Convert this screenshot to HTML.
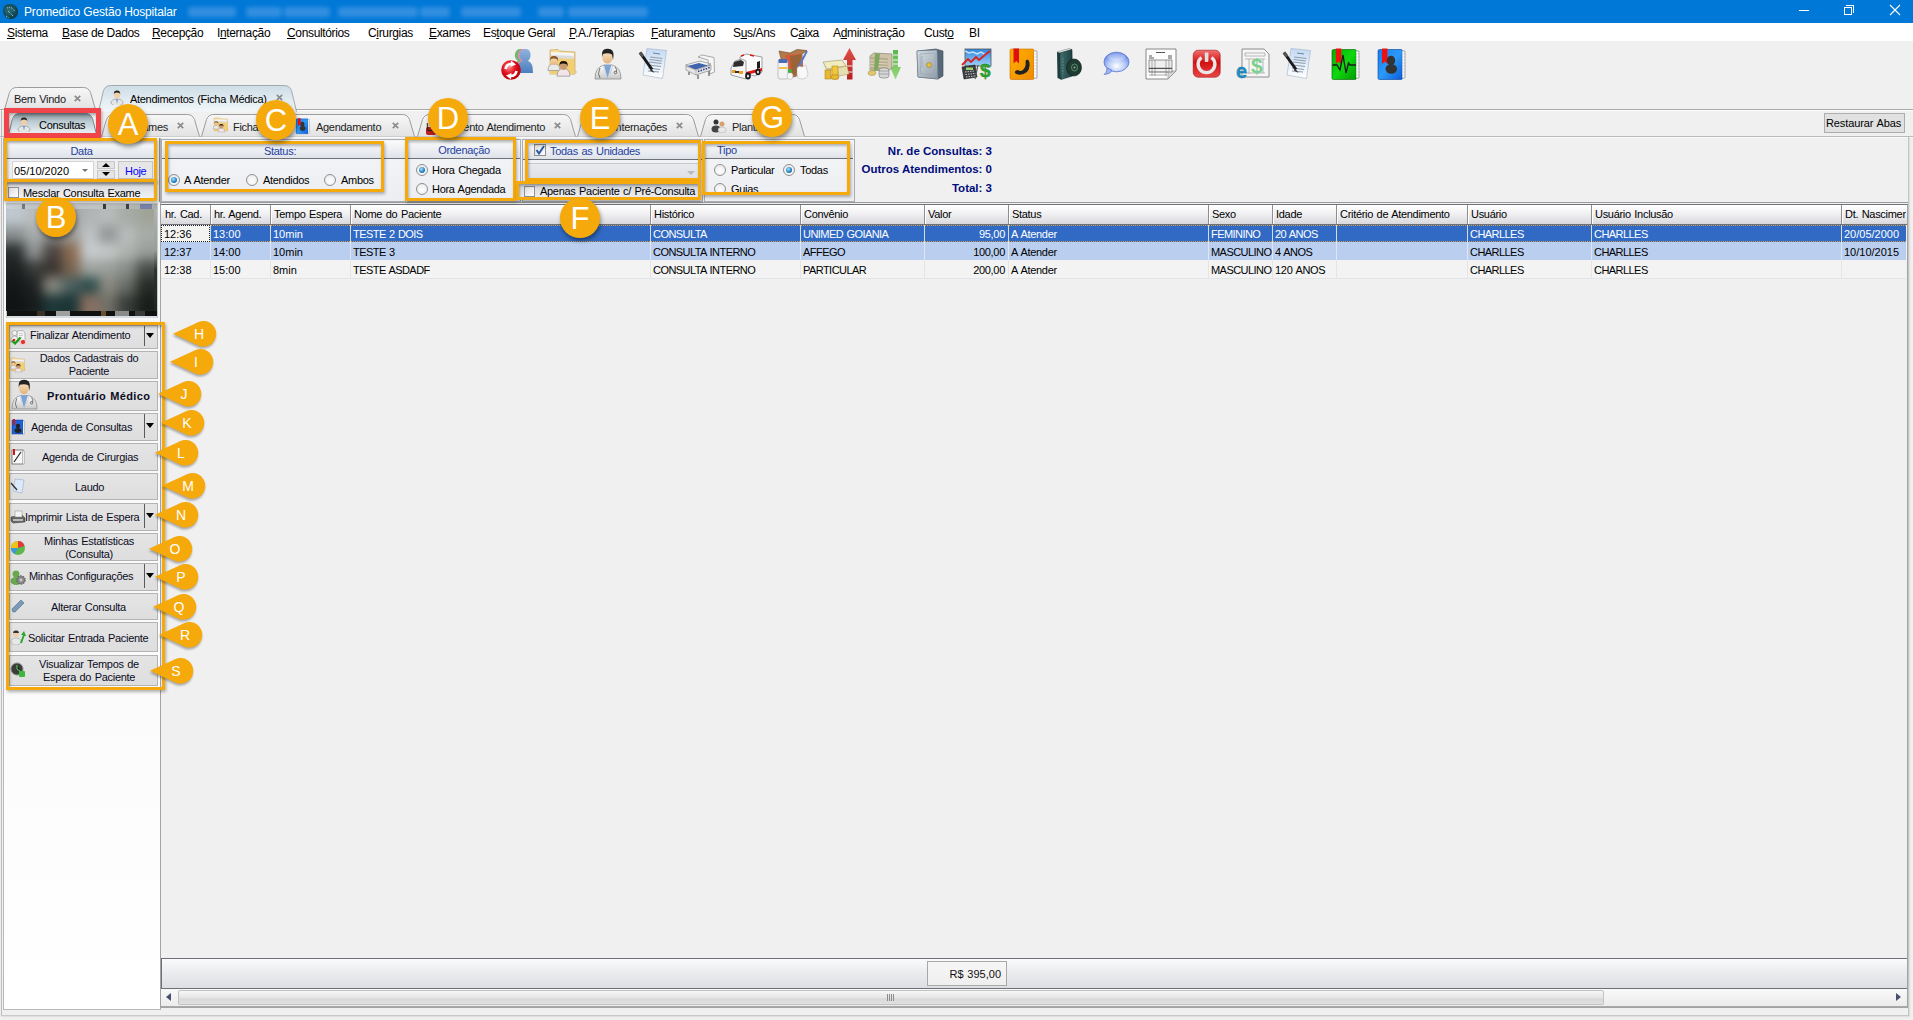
<!DOCTYPE html>
<html><head><meta charset="utf-8"><style>
*{margin:0;padding:0;box-sizing:border-box}
html,body{width:1913px;height:1020px;overflow:hidden;background:#f0f0f0;font-family:"Liberation Sans",sans-serif;font-size:11px;color:#000}
body{position:relative}
.a{position:absolute}
.t{position:absolute;white-space:nowrap;line-height:1;letter-spacing:-0.3px;word-spacing:0.8px}
.mi{position:absolute;top:27px;font-size:12px;white-space:nowrap;line-height:1;color:#000;letter-spacing:-0.35px}
.u{text-decoration:underline;text-underline-offset:1px}
.ob{position:absolute;border:3px solid #f5a90b;box-shadow:1px 2px 3px rgba(0,0,0,.35)}
.circ{position:absolute;width:40px;height:40px;border-radius:50%;background:#f5a90b;color:#fff;font-size:31px;line-height:40px;text-align:center;box-shadow:1px 3px 4px rgba(0,0,0,.4)}
.drop{position:absolute;width:30px;height:30px;background:#f5a90b;border-radius:50% 50% 50% 0;transform:rotate(45deg);box-shadow:1px 2px 3px rgba(0,0,0,.35)}
.dl{position:absolute;width:30px;height:30px;color:#fff;font-size:15px;line-height:30px;text-align:center}
.hdr{position:absolute;background:linear-gradient(#fafbfc,#dfe3e9);border-bottom:1px solid #6d7178}
.ht{position:absolute;color:#1f3f9f;white-space:nowrap;line-height:1;letter-spacing:-0.3px;word-spacing:0.8px}
.radio{position:absolute;width:12px;height:12px;border-radius:50%;border:1px solid #8e8f8f;background:radial-gradient(circle at 50% 60%,#fff,#e6e6e6)}
.radio.on::after{content:"";position:absolute;left:2px;top:2px;width:6px;height:6px;border-radius:50%;background:radial-gradient(circle at 40% 35%,#a8e0ff,#1a7fc0 60%,#0b4f80)}
.chk{position:absolute;width:11px;height:11px;border:1px solid #8e8f8f;background:linear-gradient(135deg,#dcdcdc,#fff)}
.btn{position:absolute;left:9px;width:149px;background:linear-gradient(#e4e4e4,#dedede);border:1px solid #b3b3b3}
.bt{position:absolute;white-space:nowrap;line-height:1.15;text-align:center;color:#000;width:100%}
</style></head><body>
<div class="a" style="left:0;top:0;width:1913px;height:23px;background:#0078d7"></div>
<div class="a" style="left:3px;top:4px;width:15px;height:15px;border-radius:40% 50% 45% 50%;background:radial-gradient(circle at 40% 40%,#2d6f7a,#104652 60%,#082a33)"></div>
<svg class="a" style="left:3px;top:4px" width="15" height="15"><path d="M4 4 Q9 2 12 8 M5 7 L10 12 M3 12 L6 14" stroke="#cde" stroke-width="0.9" fill="none" stroke-dasharray="1 1"/></svg>
<div class="t" style="left:24px;top:6px;font-size:12px;color:#fff;letter-spacing:-0.15px;word-spacing:0">Promedico Gestão Hospitalar</div>
<div class="a" style="left:188px;top:7px;width:48px;height:10px;border-radius:3px;background:rgba(110,170,235,.45);filter:blur(2px)"></div>
<div class="a" style="left:246px;top:7px;width:36px;height:10px;border-radius:3px;background:rgba(110,170,235,.45);filter:blur(2px)"></div>
<div class="a" style="left:284px;top:7px;width:46px;height:10px;border-radius:3px;background:rgba(110,170,235,.45);filter:blur(2px)"></div>
<div class="a" style="left:338px;top:7px;width:80px;height:10px;border-radius:3px;background:rgba(110,170,235,.45);filter:blur(2px)"></div>
<div class="a" style="left:420px;top:7px;width:30px;height:10px;border-radius:3px;background:rgba(110,170,235,.45);filter:blur(2px)"></div>
<div class="a" style="left:461px;top:7px;width:60px;height:10px;border-radius:3px;background:rgba(110,170,235,.45);filter:blur(2px)"></div>
<div class="a" style="left:538px;top:7px;width:26px;height:10px;border-radius:3px;background:rgba(110,170,235,.45);filter:blur(2px)"></div>
<div class="a" style="left:568px;top:7px;width:80px;height:10px;border-radius:3px;background:rgba(110,170,235,.45);filter:blur(2px)"></div>
<div class="a" style="left:1799px;top:10px;width:10px;height:1px;background:#fff"></div>
<div class="a" style="left:1844px;top:7px;width:8px;height:8px;border:1px solid #fff"></div>
<div class="a" style="left:1846px;top:5px;width:8px;height:8px;border-top:1px solid #fff;border-right:1px solid #fff"></div>
<svg class="a" style="left:1889px;top:4px" width="12" height="12"><path d="M1 1L11 11M11 1L1 11" stroke="#fff" stroke-width="1.1"/></svg>
<div class="a" style="left:0;top:23px;width:1913px;height:18px;background:#fff"></div>
<div class="mi" style="left:7px"><span class="u">S</span>istema</div>
<div class="mi" style="left:62px"><span class="u">B</span>ase de Dados</div>
<div class="mi" style="left:152px"><span class="u">R</span>ecepção</div>
<div class="mi" style="left:217px">I<span class="u">n</span>ternação</div>
<div class="mi" style="left:287px"><span class="u">C</span>onsultórios</div>
<div class="mi" style="left:368px">C<span class="u">i</span>rurgias</div>
<div class="mi" style="left:429px"><span class="u">E</span>xames</div>
<div class="mi" style="left:483px">Es<span class="u">t</span>oque Geral</div>
<div class="mi" style="left:569px"><span class="u">P</span>.A./Terapias</div>
<div class="mi" style="left:651px"><span class="u">F</span>aturamento</div>
<div class="mi" style="left:733px">S<span class="u">u</span>s/Ans</div>
<div class="mi" style="left:790px">C<span class="u">a</span>ixa</div>
<div class="mi" style="left:833px">A<span class="u">d</span>ministração</div>
<div class="mi" style="left:924px">Cust<span class="u">o</span></div>
<div class="mi" style="left:969px">BI</div>
<svg width="0" height="0" style="position:absolute"><defs><linearGradient id="gFace" x1="0" y1="0" x2="0" y2="1"><stop offset="0" stop-color="#fbe6c6"/><stop offset="1" stop-color="#e2b27a"/></linearGradient><linearGradient id="gCoat" x1="0" y1="0" x2="0" y2="1"><stop offset="0" stop-color="#ffffff"/><stop offset="1" stop-color="#c9c9c9"/></linearGradient><linearGradient id="gBlueP" x1="0" y1="0" x2="0" y2="1"><stop offset="0" stop-color="#8fb3dc"/><stop offset="1" stop-color="#4b7fbf"/></linearGradient><radialGradient id="gRed" cx="40%" cy="35%" r="70%"><stop offset="0" stop-color="#ff8a8a"/><stop offset="0.5" stop-color="#e0101e"/><stop offset="1" stop-color="#b0000a"/></radialGradient><linearGradient id="gFold" x1="0" y1="0" x2="0" y2="1"><stop offset="0" stop-color="#f7df9a"/><stop offset="1" stop-color="#e3b857"/></linearGradient><linearGradient id="gPaper" x1="0" y1="0" x2="0" y2="1"><stop offset="0" stop-color="#c3d9f4"/><stop offset="1" stop-color="#ffffff"/></linearGradient><linearGradient id="gRedBtn" x1="0" y1="0" x2="0" y2="1"><stop offset="0" stop-color="#f27070"/><stop offset="0.45" stop-color="#d21010"/><stop offset="1" stop-color="#e84848"/></linearGradient><linearGradient id="gOrange" x1="0" y1="0" x2="1" y2="1"><stop offset="0" stop-color="#ffb000"/><stop offset="1" stop-color="#f08a00"/></linearGradient><linearGradient id="gGreenB" x1="0" y1="0" x2="1" y2="1"><stop offset="0" stop-color="#00b000"/><stop offset="0.5" stop-color="#10d810"/><stop offset="1" stop-color="#009a00"/></linearGradient><linearGradient id="gBlueB" x1="0" y1="0" x2="1" y2="1"><stop offset="0" stop-color="#1a7cf0"/><stop offset="0.5" stop-color="#2c9af8"/><stop offset="1" stop-color="#0a5ad8"/></linearGradient><linearGradient id="gTeal" x1="0" y1="0" x2="1" y2="0"><stop offset="0" stop-color="#3f6e6e"/><stop offset="1" stop-color="#1d3f40"/></linearGradient><radialGradient id="gBub" cx="50%" cy="70%" r="75%"><stop offset="0" stop-color="#ffffff"/><stop offset="0.45" stop-color="#b8ccf8"/><stop offset="1" stop-color="#4a6ee0"/></radialGradient><linearGradient id="gSafe" x1="0" y1="0" x2="1" y2="1"><stop offset="0" stop-color="#d9e0e6"/><stop offset="1" stop-color="#8c9aa6"/></linearGradient><linearGradient id="gSky" x1="0" y1="0" x2="0" y2="1"><stop offset="0" stop-color="#2a88e0"/><stop offset="1" stop-color="#9fd0f8"/></linearGradient><linearGradient id="gArrR" x1="0" y1="0" x2="0" y2="1"><stop offset="0" stop-color="#e05048"/><stop offset="1" stop-color="#b82020"/></linearGradient><linearGradient id="gArrG" x1="0" y1="0" x2="0" y2="1"><stop offset="0" stop-color="#58b848"/><stop offset="1" stop-color="#9ad880"/></linearGradient></defs></svg>
<svg class="a" style="left:500px;top:48px;overflow:visible" width="32" height="32" viewBox="0 0 32 32"><path d="M12 24 Q12 14 18 13 Q14 10 15 6 Q16 1 20 1 Q24 1 25 6 Q26 10 22 13 Q28 14 28 24Z" fill="#74b86e"/><path d="M15 24 Q15 14 21 13 Q17 10 18 6 Q19 1 23 1 Q27 1 28 6 Q29 10 25 13 Q31 14 31 24Z" fill="#d68cb4"/><path d="M17 25 Q17 14 23 13 Q19 10 20 6 Q21 1 25.5 1 Q30 1 30.5 6 Q31 10 28 13 Q33 14 33 25Z" fill="url(#gBlueP)"/><circle cx="11" cy="22" r="9.8" fill="url(#gRed)"/><path d="M5.5 21 Q6.5 15.5 12.5 16" stroke="#fff" stroke-width="2.6" fill="none"/><path d="M11 12.5 L16 16.5 L10.5 19Z" fill="#fff"/><path d="M16.5 23 Q15.5 28.5 9.5 28" stroke="#fff" stroke-width="2.6" fill="none"/><path d="M11 31.5 L6 27.5 L11.5 25Z" fill="#fff"/></svg>
<svg class="a" style="left:546px;top:48px;overflow:visible" width="32" height="32" viewBox="0 0 32 32"><path d="M26 20 L31 24 L27 27Z" fill="#e8e8e8" stroke="#bbb" stroke-width="0.5"/><path d="M4 2 L12 1.5 L13.5 3 L29 4 L29 26 L4 26Z" fill="url(#gFold)" stroke="#c09a4a" stroke-width="0.6"/><path d="M5 4 L28 5 L28 9 L5 8Z" fill="#f4f4f4"/><path d="M5 7 L27 8 L28 11 L6 10Z" fill="#dcdcdc"/><path d="M4 11 L28 12 L29 26 L4 26Z" fill="#f2cf72"/><path d="M2.0 22.58 Q2.0 15.979999999999999 8 15.379999999999999 Q14.0 15.979999999999999 14.0 22.58Z" fill="#e9e9e9" stroke="#8d8d8d" stroke-width="0.7"/><ellipse cx="8" cy="12.559999999999999" rx="3.8" ry="4.56" fill="url(#gFace)"/><path d="M4.01 13.015999999999998 Q3.4400000000000004 7.772 8 8 Q12.94 8 11.99 13.471999999999998 L11.04 11.191999999999998 Q8 10.052 4.96 10.963999999999999Z" fill="#8a5a32"/><path d="M11.0 28.129999999999995 Q11.0 20.979999999999997 17.5 20.33 Q24.0 20.979999999999997 24.0 28.129999999999995Z" fill="#f3e4e8" stroke="#8d8d8d" stroke-width="0.7"/><ellipse cx="17.5" cy="17.56" rx="3.8" ry="4.56" fill="#c99a72"/><path d="M13.51 18.016 Q12.940000000000001 12.772 17.5 13 Q22.439999999999998 13 21.49 18.471999999999998 L20.54 16.192 Q17.5 15.052 14.46 15.963999999999999Z" fill="#1e1410"/></svg>
<svg class="a" style="left:592px;top:48px;overflow:visible" width="32" height="32" viewBox="0 0 32 32"><path d="M3 31 Q3 19 12 17 L20 17 Q29 19 29 31Z" fill="url(#gCoat)" stroke="#8d8d8d" stroke-width="0.8"/><path d="M12 17 L15.5 30 L19.5 17Z" fill="#7aa4d8"/><path d="M11 17 L14 26 M21 17 L18 26" stroke="#c8c8c8" stroke-width="0.8"/><path d="M8 20 Q5 26 8 30 M23 19 Q26 22 24 24" stroke="#666" stroke-width="0.9" fill="none"/><circle cx="23.5" cy="24.5" r="1.3" fill="none" stroke="#555" stroke-width="0.8"/><ellipse cx="15.5" cy="9" rx="5.2" ry="6.6" fill="url(#gFace)"/><path d="M10 9 Q9 0.5 15.5 0.8 Q22 0.5 21.5 8 L21 12 L20 6.5 Q16 4.5 11 6Z" fill="#232323"/></svg>
<svg class="a" style="left:638px;top:48px;overflow:visible" width="32" height="32" viewBox="0 0 32 32"><path d="M9 0.5 L28.5 2.5 L24.5 30.5 L5 27Z" fill="url(#gPaper)" stroke="#9fb2c8" stroke-width="0.6"/><path d="M15 5 L22 6" stroke="#6f8296" stroke-width="1"/><path d="M12 9 L24.5 10.5 M11.5 11.5 L24 13 M11 14 L23.5 15.5 M10.5 17 L23 18.5 M10 20 L22 21.5 M10 23 L21 24" stroke="#8f9caa" stroke-width="1.1"/><path d="M2 4.5 L14 21.5" stroke="#1a1a1a" stroke-width="3"/><path d="M2 4.5 L5 8.5" stroke="#555" stroke-width="3.2"/><path d="M13 20 L16.5 25 L12 22.5Z" fill="#333"/></svg>
<svg class="a" style="left:684px;top:48px;overflow:visible" width="32" height="32" viewBox="0 0 32 32"><path d="M14 9 L18 7 L30 9.5 L30.5 24 L26 26 L24 12Z" fill="#f6f6f6" stroke="#8a8a8a" stroke-width="0.7"/><path d="M1.5 17 L16 13 L27 16 L12 21Z" fill="#f4f4f4" stroke="#8a8a8a" stroke-width="0.7"/><path d="M3.5 18 L15 15 L24 17.5 L11 21.5Z" fill="#3f64b0"/><path d="M2 18 L12 22 L27 17 L27 22 L12 27 L2 22Z" fill="#e6e6e6" stroke="#8a8a8a" stroke-width="0.7"/><path d="M12 22 L12 27" stroke="#999" stroke-width="0.6"/><path d="M14 23.5 L26 19.5" stroke="#1d3d80" stroke-width="1.6" stroke-dasharray="1.5 1.2"/><path d="M5 24 L5 27 M14 27 L14 31 M25 23 L25 28" stroke="#666" stroke-width="1.3"/></svg>
<svg class="a" style="left:730px;top:48px;overflow:visible" width="32" height="32" viewBox="0 0 32 32"><path d="M10 9 L16 6 L32 9 L32 24 L25 28 L10 24Z" fill="#fbfbfb" stroke="#7a7a7a" stroke-width="0.7"/><path d="M1 20 L5 13 L12 11 L16 13 L16 31 L1 27Z" fill="#f6f6f6" stroke="#7a7a7a" stroke-width="0.7"/><path d="M4 14 L11 12 L14 14 L13 18 L3 19Z" fill="#2e2e2e"/><path d="M27 14 L30 13 L30 20 L27 21Z" fill="#1e1e1e"/><path d="M16 24 L32 20 L32 23 L16 27Z" fill="#e01818" stroke-dasharray="2 1"/><path d="M11 8 L14 7 M20 7 L24 8" stroke="#e01818" stroke-width="1.6"/><rect x="2" y="22" width="4" height="3" fill="#f0a020"/><rect x="9" y="23" width="4" height="3" fill="#f0a020"/><rect x="5" y="23" width="4" height="2" fill="#333"/><ellipse cx="18" cy="28" rx="2.8" ry="3.4" fill="#151515"/><ellipse cx="18" cy="28" rx="1.2" ry="1.6" fill="#ddd"/><ellipse cx="28" cy="24" rx="2.6" ry="3.2" fill="#151515"/><ellipse cx="28" cy="24" rx="1.1" ry="1.5" fill="#ddd"/></svg>
<svg class="a" style="left:776px;top:48px;overflow:visible" width="32" height="32" viewBox="0 0 32 32"><path d="M3 3 L14 5 L21 1.5 L31 2.5 L26 6 L27 26 L14 30 L9 26Z" fill="#b27a48" stroke="#6d4622" stroke-width="0.6"/><path d="M9 7 L25 6 L26 24 L14 29Z" fill="#d65a3a"/><path d="M14 8 L25 6.5 L24 25 L16 28Z" fill="#9a6438"/><path d="M22 20 L31 3" stroke="#5a7ac8" stroke-width="2"/><rect x="2" y="12" width="10" height="19" rx="2" fill="#f2f4f6" stroke="#a0a0a0" stroke-width="0.6"/><rect x="2.5" y="11" width="9" height="4" rx="1" fill="#4a6ab8"/><rect x="3" y="19" width="8" height="2" fill="#f0c040"/><ellipse cx="14" cy="28" rx="3" ry="3.5" fill="#f6f6f6" stroke="#aaa" stroke-width="0.5"/><ellipse cx="14" cy="23" rx="2.2" ry="2" fill="#40b040"/><path d="M21 20 Q23 17 26 19 L30 17 L32 26 Q31 31 26 31 Q21 31 21 26Z" fill="#f8f8f8" stroke="#aaa" stroke-width="0.5"/></svg>
<svg class="a" style="left:822px;top:48px;overflow:visible" width="32" height="32" viewBox="0 0 32 32"><path d="M27.5 0 L34 12 L30.5 12 L30.5 31.5 L25 31.5 L25 12 L21 12Z" fill="url(#gArrR)"/><path d="M25 18 L30.5 18 M25 24 L30.5 24" stroke="#f0f0f0" stroke-width="1.2"/><path d="M1 14 L20 12 L24 18 L5 21Z" fill="#f0ecc0" stroke="#9c9460" stroke-width="0.6"/><path d="M1 16 L5 23 L24 20 L24 18 L5 21Z" fill="#ccc490"/><path d="M15 20 L25 18 L27 26 L17 28Z" fill="#e6e0b0" stroke="#9c9460" stroke-width="0.5"/><rect x="3" y="22" width="6" height="9" fill="#e8b830" stroke="#a87810" stroke-width="0.5"/><rect x="10" y="18" width="6" height="13" fill="#f0c840" stroke="#a87810" stroke-width="0.5"/><ellipse cx="13" cy="29" rx="4" ry="2.5" fill="#e8b830" stroke="#a87810" stroke-width="0.5"/></svg>
<svg class="a" style="left:868px;top:48px;overflow:visible" width="32" height="32" viewBox="0 0 32 32"><path d="M25 2 L30 2 L30 19 L33 19 L27.5 31.5 L22 19 L25 19Z" fill="url(#gArrG)"/><path d="M25 7 L30 7 M25 12 L30 12 M25 16 L30 16" stroke="#f0f0f0" stroke-width="1"/><path d="M2 8 L6 5 L24 6 L24 20 L20 23 L2 22Z" fill="#cfc4a8" stroke="#7a7060" stroke-width="0.6"/><path d="M2 9 L20 10 L20 23 L2 22Z" fill="#b8ae90"/><path d="M2 12 L20 13 M2 15 L20 16 M2 18 L20 19" stroke="#e8e0c8" stroke-width="0.8"/><path d="M7 5.5 L12 5.5 L10 22.5 L6 22.5Z" fill="#7ea860"/><ellipse cx="4" cy="25" rx="4" ry="2.5" fill="#e0c870" stroke="#a08830" stroke-width="0.5"/><rect x="11" y="20" width="10" height="10" rx="3" fill="#d6d6d6" stroke="#777" stroke-width="0.6"/><path d="M11 23 L21 23 M11 26 L21 26" stroke="#888" stroke-width="0.6"/></svg>
<svg class="a" style="left:914px;top:48px;overflow:visible" width="32" height="32" viewBox="0 0 32 32"><path d="M3 3 L22 1 L29 3 L29 28 L24 31 L4 29Z" fill="#56697a" stroke="#3d4a56" stroke-width="0.6"/><path d="M3 3 L23 2 L24 31 L4 29Z" fill="url(#gSafe)" stroke="#6f7e8a" stroke-width="0.6"/><path d="M6 6 L21 5 L21.5 27 L6.5 26Z" fill="none" stroke="#9aa8b4" stroke-width="0.8"/><path d="M8 8 L8 20" stroke="#a9b6c0" stroke-width="1.5"/><circle cx="15" cy="17" r="2.4" fill="#e6c040" stroke="#9c7a10" stroke-width="0.6"/></svg>
<svg class="a" style="left:960px;top:48px;overflow:visible" width="32" height="32" viewBox="0 0 32 32"><rect x="5" y="1" width="26" height="17" fill="url(#gSky)" stroke="#555" stroke-width="0.8"/><path d="M5 3 L9 5 L13 4 L17 6 L21 4 L26 7" stroke="#fff" stroke-width="1.5" opacity="0.7" fill="none"/><path d="M2 17 L8 11 L11 14 L16 9 L19 12 L26 6 L30 3" stroke="#d82020" stroke-width="1.8" fill="none"/><path d="M2 19 L15 17 L17 29 L4 31Z" fill="#3a3d42" stroke="#1a1a1a" stroke-width="0.6"/><rect x="6" y="19.5" width="7" height="2.5" fill="#9ad86a"/><path d="M5 24 L14 23 M5.5 26.5 L14.5 25.5 M6 29 L15 28" stroke="#c8c8c8" stroke-width="1" stroke-dasharray="1.5 1"/><path d="M18 17 L15 31" stroke="#5a5a5a" stroke-width="1.2"/><text x="20" y="29" font-size="19" font-weight="bold" fill="#2ea82e" stroke="#1a7a1a" stroke-width="0.4" font-family="Liberation Sans">$</text></svg>
<svg class="a" style="left:1006px;top:48px;overflow:visible" width="32" height="32" viewBox="0 0 32 32"><rect x="4" y="1" width="24" height="30.5" rx="1.5" fill="url(#gOrange)" stroke="#c86e00" stroke-width="0.6"/><path d="M28 3 L31 3 L31 30 L28 30" fill="#fff" stroke="#777" stroke-width="0.6"/><path d="M28 6 L31 6 M28 9 L31 9 M28 12 L31 12 M28 15 L31 15 M28 18 L31 18 M28 21 L31 21 M28 24 L31 24 M28 27 L31 27" stroke="#999" stroke-width="0.4"/><path d="M7.5 0.5 L13 0.5 L13 15.5 L10.3 13 L7.5 15.5Z" fill="#e01010"/><path d="M9 25 Q14 29 21 24 Q25 19 23 13 Q22 11 20 12 L19.5 14 Q20.5 19 17 22 Q14 24 12 22 L10 22.5 Q8.5 23.5 9 25Z" fill="#222"/></svg>
<svg class="a" style="left:1052px;top:48px;overflow:visible" width="32" height="32" viewBox="0 0 32 32"><path d="M5 4 L17 0.5 L20 1.5 L8 5Z" fill="#e8e8e8" stroke="#777" stroke-width="0.5"/><path d="M5 4 L8 5 L9 31.5 L5.5 30Z" fill="#1d3e3e"/><path d="M8 5 L20 1.5 L20.5 28 L9 31.5Z" fill="url(#gTeal)" stroke="#0e2424" stroke-width="0.5"/><path d="M11 10 L11 26" stroke="#6a8a8a" stroke-width="0.8" stroke-dasharray="2 1"/><ellipse cx="22" cy="19.5" rx="7.5" ry="8.5" fill="#1f3a30" stroke="#0a1a14" stroke-width="0.6"/><ellipse cx="22.5" cy="19.5" rx="3" ry="3.5" fill="none" stroke="#5a9a7a" stroke-width="0.9"/><circle cx="22.5" cy="19.5" r="1" fill="#aaa"/></svg>
<svg class="a" style="left:1098px;top:48px;overflow:visible" width="32" height="32" viewBox="0 0 32 32"><ellipse cx="18.5" cy="14" rx="12.5" ry="9.8" fill="url(#gBub)" stroke="#5a72d0" stroke-width="0.8"/><path d="M9 20 Q9 25 6 26.5 Q13 26 14 22Z" fill="#9ab4f4" stroke="#5a72d0" stroke-width="0.7"/><ellipse cx="18.5" cy="9" rx="9" ry="4" fill="#fff" opacity="0.25"/></svg>
<svg class="a" style="left:1144px;top:48px;overflow:visible" width="32" height="32" viewBox="0 0 32 32"><path d="M2 1 L32 1 L32 23 L24 31 L2 31Z" fill="#fdfdfd" stroke="#7a7a7a" stroke-width="0.9"/><path d="M24 31 L24 23 L32 23Z" fill="#d8d8d8" stroke="#8a8a8a" stroke-width="0.6"/><path d="M12 4.5 L21 4.5 M5 8 L8 8 M24 8 L28 8 M5 10 L10 10 M24 10 L28 10" stroke="#444" stroke-width="0.9"/><rect x="5" y="12" width="23" height="12" fill="#f0f0f0" stroke="#666" stroke-width="0.7"/><path d="M8 12 L8 28 M11 12 L11 28 M22 12 L22 28 M25 12 L25 24 M5 20 L28 20 M5 24 L24 24 M5 27 L23 27" stroke="#888" stroke-width="0.7"/><path d="M5 20.5 L28 20.5" stroke="#444" stroke-width="0.9"/></svg>
<svg class="a" style="left:1190px;top:48px;overflow:visible" width="32" height="32" viewBox="0 0 32 32"><rect x="3.2" y="2.2" width="27" height="27" rx="5" fill="url(#gRedBtn)" stroke="#a01010" stroke-width="0.6"/><path d="M11.5 9.5 A8.4 8.4 0 1 0 21.5 9.5" stroke="#e8e8e8" stroke-width="3.4" fill="none"/><rect x="14.8" y="4.5" width="3.6" height="9.5" rx="0.8" fill="#e0e0e0"/></svg>
<svg class="a" style="left:1236px;top:48px;overflow:visible" width="32" height="32" viewBox="0 0 32 32"><path d="M6 1 L28 1 L33 6 L33 29 L6 29Z" fill="#f6f6f6" stroke="#8c8c8c" stroke-width="1"/><path d="M9 5 L29 5 L29 8 L9 8Z M9 11 L29 11 M13 11 L13 26 M27 11 L27 25 M9 25 L29 25" stroke="#b0b0b0" stroke-width="0.9" fill="none"/><text x="15" y="25" font-size="21" font-weight="bold" fill="#7ccf8c" font-family="Liberation Sans">$</text><text x="0" y="30" font-size="20" font-weight="bold" fill="#1a90c8" stroke="#0a6a9a" stroke-width="0.3" font-family="Liberation Sans">e</text></svg>
<svg class="a" style="left:1282px;top:48px;overflow:visible" width="32" height="32" viewBox="0 0 32 32"><path d="M9 0.5 L28.5 2.5 L24.5 30.5 L5 27Z" fill="url(#gPaper)" stroke="#9fb2c8" stroke-width="0.6"/><path d="M15 5 L22 6" stroke="#6f8296" stroke-width="1"/><path d="M12 9 L24.5 10.5 M11.5 11.5 L24 13 M11 14 L23.5 15.5 M10.5 17 L23 18.5 M10 20 L22 21.5 M10 23 L21 24" stroke="#8f9caa" stroke-width="1.1"/><path d="M2 4.5 L14 21.5" stroke="#1a1a1a" stroke-width="3"/><path d="M2 4.5 L5 8.5" stroke="#555" stroke-width="3.2"/><path d="M13 20 L16.5 25 L12 22.5Z" fill="#333"/></svg>
<svg class="a" style="left:1328px;top:48px;overflow:visible" width="32" height="32" viewBox="0 0 32 32"><rect x="4" y="1.5" width="24.3" height="30" rx="1.5" fill="url(#gGreenB)" stroke="#006000" stroke-width="0.6"/><path d="M28.3 3 L31 3 L31 30 L28.3 30" fill="#fff" stroke="#777" stroke-width="0.6"/><path d="M28.3 6 L31 6 M28.3 9 L31 9 M28.3 12 L31 12 M28.3 15 L31 15 M28.3 18 L31 18 M28.3 21 L31 21 M28.3 24 L31 24 M28.3 27 L31 27" stroke="#999" stroke-width="0.4"/><path d="M7.8 0.5 L13.3 0.5 L13.3 16 L10.5 13.5 L7.8 16Z" fill="#f01010"/><path d="M4.5 17 L9 17 L12 22 L15 7 L18 25 L20.5 15 L22 17 L28 17" stroke="#1a1a1a" stroke-width="1.3" fill="none"/></svg>
<svg class="a" style="left:1374px;top:48px;overflow:visible" width="32" height="32" viewBox="0 0 32 32"><rect x="4" y="1.5" width="24.4" height="30" rx="1.5" fill="url(#gBlueB)" stroke="#0040a0" stroke-width="0.6"/><path d="M28.4 3 L31 3 L31 30 L28.4 30" fill="#fff" stroke="#777" stroke-width="0.6"/><path d="M28.4 6 L31 6 M28.4 9 L31 9 M28.4 12 L31 12 M28.4 15 L31 15 M28.4 18 L31 18 M28.4 21 L31 21 M28.4 24 L31 24 M28.4 27 L31 27" stroke="#999" stroke-width="0.4"/><path d="M8 0.5 L13.4 0.5 L13.4 16 L10.7 13.5 L8 16Z" fill="#f01010"/><ellipse cx="17" cy="12.5" rx="4.2" ry="4.8" fill="#333"/><ellipse cx="17.3" cy="21" rx="5.8" ry="4.8" fill="#333"/></svg>
<svg class="a" style="left:0;top:80px" width="1913" height="62" viewBox="0 80 1913 62"><defs><linearGradient id="tin" x1="0" y1="0" x2="0" y2="1"><stop offset="0" stop-color="#f7f7f7"/><stop offset="1" stop-color="#e2e2e2"/></linearGradient><linearGradient id="tact" x1="0" y1="0" x2="0" y2="1"><stop offset="0" stop-color="#cddde6"/><stop offset="1" stop-color="#f2f7fa"/></linearGradient><linearGradient id="tcons" x1="0" y1="0" x2="0" y2="1"><stop offset="0" stop-color="#7f8e96"/><stop offset="0.35" stop-color="#b9c8d0"/><stop offset="1" stop-color="#eef5f8"/></linearGradient></defs><rect x="0" y="109" width="1913" height="1" fill="#a9a9a9"/><rect x="0" y="110" width="1913" height="1" fill="#fdfdfd"/><path d="M4.5 109.5 L9.5 92.5 Q11.5 87.5 16.5 87.5 L83.5 87.5 Q88.5 87.5 90.5 92.5 L95.5 109.5" fill="url(#tin)" stroke="#9c9c9c" stroke-width="1"/><path d="M98.5 111.5 L103.5 90.5 Q105.5 85.5 110.5 85.5 L284.5 85.5 Q289.5 85.5 291.5 90.5 L296.5 111.5" fill="url(#tact)" stroke="#a3a9ad" stroke-width="1"/><rect x="0" y="136" width="1913" height="1" fill="#b9b9b9"/><rect x="0" y="137" width="1913" height="1" fill="#fafafa"/><path d="M101.5 136.5 L106.5 119.5 Q108.5 114.5 113.5 114.5 L187.5 114.5 Q192.5 114.5 194.5 119.5 L199.5 136.5" fill="url(#tin)" stroke="#9c9c9c" stroke-width="1"/><path d="M201.5 136.5 L206.5 119.5 Q208.5 114.5 213.5 114.5 L271.5 114.5 Q276.5 114.5 278.5 119.5 L283.5 136.5" fill="url(#tin)" stroke="#9c9c9c" stroke-width="1"/><path d="M283.5 136.5 L288.5 119.5 Q290.5 114.5 295.5 114.5 L402.5 114.5 Q407.5 114.5 409.5 119.5 L414.5 136.5" fill="url(#tin)" stroke="#9c9c9c" stroke-width="1"/><path d="M417.5 136.5 L422.5 119.5 Q424.5 114.5 429.5 114.5 L563.5 114.5 Q568.5 114.5 570.5 119.5 L575.5 136.5" fill="url(#tin)" stroke="#9c9c9c" stroke-width="1"/><path d="M577.5 136.5 L582.5 119.5 Q584.5 114.5 589.5 114.5 L686.5 114.5 Q691.5 114.5 693.5 119.5 L698.5 136.5" fill="url(#tin)" stroke="#9c9c9c" stroke-width="1"/><path d="M700.5 136.5 L705.5 119.5 Q707.5 114.5 712.5 114.5 L792.5 114.5 Q797.5 114.5 799.5 119.5 L804.5 136.5" fill="url(#tin)" stroke="#9c9c9c" stroke-width="1"/><path d="M8.5 134.5 L12.5 118.5 Q14.5 113.5 19.5 113.5 L85.5 113.5 Q90.5 113.5 92.5 118.5 L96.5 134.5" fill="url(#tcons)" stroke="#7d8a92" stroke-width="1"/></svg>
<div class="t" style="left:14px;top:94px;color:#1a1a1a">Bem Vindo</div>
<svg class="a" style="left:74px;top:95px" width="7" height="7"><path d="M0.8 0.8L6.2 6.2M6.2 0.8L0.8 6.2" stroke="#8c8c8c" stroke-width="1.7"/></svg>
<svg class="a" style="left:110px;top:89px" width="14" height="16" viewBox="0 0 14 16"><ellipse cx="7" cy="13.5" rx="6" ry="3.5" fill="#e6e6e6" stroke="#8a8a8a" stroke-width="0.6"/><path d="M6 10 L7 15 L8 10Z" fill="#6d9ad0"/><ellipse cx="7" cy="6" rx="3" ry="3.6" fill="#f1cfa6"/><path d="M3.8 5.5 Q3.5 1.5 7 1.6 Q10.5 1.5 10.2 5.5 L9.5 4 Q7 3 4.5 4Z" fill="#222"/></svg>
<div class="t" style="left:130px;top:94px;color:#000">Atendimentos (Ficha Médica)</div>
<svg class="a" style="left:276px;top:94px" width="7" height="7"><path d="M0.8 0.8L6.2 6.2M6.2 0.8L0.8 6.2" stroke="#8c8c8c" stroke-width="1.7"/></svg>
<svg class="a" style="left:17px;top:116px" width="14" height="16" viewBox="0 0 14 16"><ellipse cx="7" cy="13.5" rx="6" ry="3.5" fill="#e6e6e6" stroke="#8a8a8a" stroke-width="0.6"/><path d="M6 10 L7 15 L8 10Z" fill="#6d9ad0"/><ellipse cx="7" cy="6" rx="3" ry="3.6" fill="#f1cfa6"/><path d="M3.8 5.5 Q3.5 1.5 7 1.6 Q10.5 1.5 10.2 5.5 L9.5 4 Q7 3 4.5 4Z" fill="#222"/></svg>
<div class="t" style="left:39px;top:120px;color:#000">Consultas</div>
<div class="t" style="left:-132px;width:300px;text-align:right;top:122px;color:#222">Exames</div>
<svg class="a" style="left:177px;top:122px" width="7" height="7"><path d="M0.8 0.8L6.2 6.2M6.2 0.8L0.8 6.2" stroke="#8c8c8c" stroke-width="1.7"/></svg>
<svg class="a" style="left:212px;top:117px;overflow:visible" width="17" height="17" viewBox="0 0 32 32"><path d="M26 20 L31 24 L27 27Z" fill="#e8e8e8" stroke="#bbb" stroke-width="0.5"/><path d="M4 2 L12 1.5 L13.5 3 L29 4 L29 26 L4 26Z" fill="url(#gFold)" stroke="#c09a4a" stroke-width="0.6"/><path d="M5 4 L28 5 L28 9 L5 8Z" fill="#f4f4f4"/><path d="M5 7 L27 8 L28 11 L6 10Z" fill="#dcdcdc"/><path d="M4 11 L28 12 L29 26 L4 26Z" fill="#f2cf72"/><path d="M2.0 22.58 Q2.0 15.979999999999999 8 15.379999999999999 Q14.0 15.979999999999999 14.0 22.58Z" fill="#e9e9e9" stroke="#8d8d8d" stroke-width="0.7"/><ellipse cx="8" cy="12.559999999999999" rx="3.8" ry="4.56" fill="url(#gFace)"/><path d="M4.01 13.015999999999998 Q3.4400000000000004 7.772 8 8 Q12.94 8 11.99 13.471999999999998 L11.04 11.191999999999998 Q8 10.052 4.96 10.963999999999999Z" fill="#8a5a32"/><path d="M11.0 28.129999999999995 Q11.0 20.979999999999997 17.5 20.33 Q24.0 20.979999999999997 24.0 28.129999999999995Z" fill="#f3e4e8" stroke="#8d8d8d" stroke-width="0.7"/><ellipse cx="17.5" cy="17.56" rx="3.8" ry="4.56" fill="#c99a72"/><path d="M13.51 18.016 Q12.940000000000001 12.772 17.5 13 Q22.439999999999998 13 21.49 18.471999999999998 L20.54 16.192 Q17.5 15.052 14.46 15.963999999999999Z" fill="#1e1410"/></svg>
<div class="a" style="left:233px;top:118px;width:55px;height:16px;overflow:hidden"><div class="t" style="left:0;top:4px;color:#222">Ficha Médica</div></div>
<svg class="a" style="left:294px;top:118px;overflow:visible" width="16" height="16" viewBox="0 0 32 32"><rect x="4" y="1.5" width="24.4" height="30" rx="1.5" fill="url(#gBlueB)" stroke="#0040a0" stroke-width="0.6"/><path d="M28.4 3 L31 3 L31 30 L28.4 30" fill="#fff" stroke="#777" stroke-width="0.6"/><path d="M28.4 6 L31 6 M28.4 9 L31 9 M28.4 12 L31 12 M28.4 15 L31 15 M28.4 18 L31 18 M28.4 21 L31 21 M28.4 24 L31 24 M28.4 27 L31 27" stroke="#999" stroke-width="0.4"/><path d="M8 0.5 L13.4 0.5 L13.4 16 L10.7 13.5 L8 16Z" fill="#f01010"/><ellipse cx="17" cy="12.5" rx="4.2" ry="4.8" fill="#333"/><ellipse cx="17.3" cy="21" rx="5.8" ry="4.8" fill="#333"/></svg>
<div class="t" style="left:316px;top:122px;color:#222">Agendamento</div>
<svg class="a" style="left:392px;top:122px" width="7" height="7"><path d="M0.8 0.8L6.2 6.2M6.2 0.8L0.8 6.2" stroke="#8c8c8c" stroke-width="1.7"/></svg>
<div class="a" style="left:426px;top:127px;width:10px;height:8px;background:#c02020;border-radius:2px"></div>
<div class="t" style="left:245px;width:300px;text-align:right;top:122px;color:#222">Lançamento Atendimento</div>
<svg class="a" style="left:554px;top:122px" width="7" height="7"><path d="M0.8 0.8L6.2 6.2M6.2 0.8L0.8 6.2" stroke="#8c8c8c" stroke-width="1.7"/></svg>
<div class="t" style="left:367px;width:300px;text-align:right;top:122px;color:#222">Internações</div>
<svg class="a" style="left:676px;top:122px" width="7" height="7"><path d="M0.8 0.8L6.2 6.2M6.2 0.8L0.8 6.2" stroke="#8c8c8c" stroke-width="1.7"/></svg>
<svg class="a" style="left:711px;top:117px" width="16" height="16" viewBox="0 0 16 16"><circle cx="5" cy="5" r="2.5" fill="#333"/><ellipse cx="5" cy="12" rx="4.5" ry="3.5" fill="#444"/><circle cx="11" cy="7" r="2.5" fill="#d9a070"/><ellipse cx="11" cy="13" rx="4" ry="3" fill="#e8e8e8" stroke="#999" stroke-width="0.4"/></svg>
<div class="t" style="left:732px;top:122px;color:#222">Plantão</div>
<div class="a" style="left:1824px;top:113px;width:81px;height:20px;background:#e1e1e1;border:1px solid #adadad"></div>
<div class="t" style="left:1826px;top:118px;color:#000;letter-spacing:-0.1px">Restaurar Abas</div>
<div class="a" style="left:3px;top:138px;width:158px;height:872px;border-left:1px solid #b9b9b9;border-bottom:1px solid #b9b9b9;border-right:1px solid #b0b0b0;background:linear-gradient(#f6f6f6,#fbfbfb 60%,#ffffff)"></div>
<div class="a" style="left:6px;top:140px;width:151px;height:40px;border:1px solid #a9adb3;background:linear-gradient(#f4f5f7,#eceef1)"></div>
<div class="hdr" style="left:7px;top:141px;width:149px;height:18px"></div><div class="ht" style="left:7px;top:146px;width:149px;text-align:center">Data</div>
<div class="a" style="left:12px;top:161px;width:82px;height:18px;background:#fff;border:1px solid #d4d4d4"></div>
<div class="t" style="left:14px;top:166px;letter-spacing:0">05/10/2020</div>
<div class="a" style="left:82px;top:169px;width:0;height:0;border-left:3px solid transparent;border-right:3px solid transparent;border-top:3px solid #777"></div>
<div class="a" style="left:97px;top:161px;width:18px;height:8px;background:#e4e4e4;border:1px solid #c8c8c8"></div>
<div class="a" style="left:97px;top:170px;width:18px;height:9px;background:#e4e4e4;border:1px solid #c8c8c8"></div>
<div class="a" style="left:102px;top:163px;width:0;height:0;border-left:4px solid transparent;border-right:4px solid transparent;border-bottom:4px solid #000"></div>
<div class="a" style="left:102px;top:172px;width:0;height:0;border-left:4px solid transparent;border-right:4px solid transparent;border-top:4px solid #000"></div>
<div class="a" style="left:118px;top:161px;width:35px;height:18px;background:#e6e6e6;border:1px solid #c4c4c4"></div>
<div class="t" style="left:125px;top:166px;color:#0000ff">Hoje</div>
<div class="a" style="left:6px;top:183px;width:151px;height:16px;background:linear-gradient(#d7dade,#f3f4f6)"></div>
<div class="chk" style="left:8px;top:187px"></div>
<div class="t" style="left:23px;top:188px">Mesclar Consulta Exame</div>
<div class="a" style="left:159px;top:138px;width:1px;height:64px;background:#8c8c8c"></div>
<div class="a" style="left:161px;top:139px;width:245px;height:63px;border:1px solid #a9adb3;background:linear-gradient(#f4f5f7,#eceef1)"></div>
<div class="hdr" style="left:162px;top:141px;width:243px;height:18px"></div>
<div class="ht" style="left:264px;top:146px">Status:</div>
<div class="radio on" style="left:168px;top:174px"></div><div class="t" style="left:184px;top:175px">A Atender</div>
<div class="radio" style="left:246px;top:174px"></div><div class="t" style="left:263px;top:175px">Atendidos</div>
<div class="radio" style="left:324px;top:174px"></div><div class="t" style="left:341px;top:175px">Ambos</div>
<div class="a" style="left:407px;top:139px;width:114px;height:63px;border:1px solid #a9adb3;background:linear-gradient(#f4f5f7,#eceef1)"></div>
<div class="hdr" style="left:408px;top:140px;width:112px;height:19px"></div><div class="ht" style="left:408px;top:145px;width:112px;text-align:center">Ordenação</div>
<div class="radio on" style="left:416px;top:164px"></div><div class="t" style="left:432px;top:165px">Hora Chegada</div>
<div class="radio" style="left:416px;top:183px"></div><div class="t" style="left:432px;top:184px">Hora Agendada</div>
<div class="a" style="left:522px;top:139px;width:181px;height:63px;border:1px solid #a9adb3;background:linear-gradient(#f4f5f7,#eceef1)"></div>
<div class="hdr" style="left:523px;top:142px;width:179px;height:18px"></div>
<div class="chk" style="left:534px;top:144px;width:12px;height:12px"></div>
<svg class="a" style="left:535px;top:145px" width="10" height="10"><path d="M1.5 5 L4 8.5 L9 1" stroke="#2f5aa8" stroke-width="2" fill="none"/></svg>
<div class="ht" style="left:550px;top:146px">Todas as Unidades</div>
<div class="a" style="left:528px;top:163px;width:172px;height:15px;background:linear-gradient(#e9eaee,#dfe0e5);border-top:1px solid #c8c9cd"></div>
<div class="a" style="left:687px;top:171px;width:0;height:0;border-left:4px solid transparent;border-right:4px solid transparent;border-top:4px solid #b9b9b9"></div>
<div class="a" style="left:519px;top:183px;width:180px;height:15px;background:linear-gradient(#d5d8dc,#eceef1)"></div>
<div class="chk" style="left:524px;top:186px"></div>
<div class="t" style="left:540px;top:186px">Apenas Paciente c/ Pré-Consulta</div>
<div class="a" style="left:704px;top:139px;width:151px;height:63px;border:1px solid #a9adb3;background:linear-gradient(#f4f5f7,#eceef1)"></div>
<div class="hdr" style="left:705px;top:143px;width:148px;height:16px"></div>
<div class="ht" style="left:717px;top:145px">Tipo</div>
<div class="radio" style="left:714px;top:164px"></div><div class="t" style="left:731px;top:165px">Particular</div>
<div class="radio on" style="left:783px;top:164px"></div><div class="t" style="left:800px;top:165px">Todas</div>
<div class="a" style="left:705px;top:180px;width:148px;height:15px;overflow:hidden"><div class="radio" style="left:9px;top:3px"></div><div class="t" style="left:26px;top:4px">Guias</div></div>
<div class="t" style="left:700px;width:292px;text-align:right;top:146px;font-size:11.5px;font-weight:bold;color:#000c7c;letter-spacing:0;word-spacing:0">Nr. de Consultas: 3</div>
<div class="t" style="left:700px;width:292px;text-align:right;top:164px;font-size:11.5px;font-weight:bold;color:#000c7c;letter-spacing:0;word-spacing:0">Outros Atendimentos: 0</div>
<div class="t" style="left:700px;width:292px;text-align:right;top:183px;font-size:11.5px;font-weight:bold;color:#000c7c;letter-spacing:0;word-spacing:0">Total: 3</div>
<div class="a" style="left:160px;top:202px;width:1750px;height:1px;background:#9a9a9a"></div>
<div class="a" style="left:160px;top:204px;width:1748px;height:804px;border:1px solid #a3a3a3;border-top:1px solid #6f737a;background:#f0f0f0"></div>
<div class="a" style="left:161px;top:205px;width:1746px;height:20px;background:linear-gradient(#ffffff,#f1f1f3 45%,#d9d9dd);border-bottom:1px solid #6f7278"></div>
<div class="a" style="left:210px;top:205px;width:1px;height:19px;background:#8e8e8e"></div>
<div class="a" style="left:211px;top:205px;width:1px;height:19px;background:#fff"></div>
<div class="a" style="left:270px;top:205px;width:1px;height:19px;background:#8e8e8e"></div>
<div class="a" style="left:271px;top:205px;width:1px;height:19px;background:#fff"></div>
<div class="a" style="left:350px;top:205px;width:1px;height:19px;background:#8e8e8e"></div>
<div class="a" style="left:351px;top:205px;width:1px;height:19px;background:#fff"></div>
<div class="a" style="left:650px;top:205px;width:1px;height:19px;background:#8e8e8e"></div>
<div class="a" style="left:651px;top:205px;width:1px;height:19px;background:#fff"></div>
<div class="a" style="left:800px;top:205px;width:1px;height:19px;background:#8e8e8e"></div>
<div class="a" style="left:801px;top:205px;width:1px;height:19px;background:#fff"></div>
<div class="a" style="left:924px;top:205px;width:1px;height:19px;background:#8e8e8e"></div>
<div class="a" style="left:925px;top:205px;width:1px;height:19px;background:#fff"></div>
<div class="a" style="left:1008px;top:205px;width:1px;height:19px;background:#8e8e8e"></div>
<div class="a" style="left:1009px;top:205px;width:1px;height:19px;background:#fff"></div>
<div class="a" style="left:1208px;top:205px;width:1px;height:19px;background:#8e8e8e"></div>
<div class="a" style="left:1209px;top:205px;width:1px;height:19px;background:#fff"></div>
<div class="a" style="left:1272px;top:205px;width:1px;height:19px;background:#8e8e8e"></div>
<div class="a" style="left:1273px;top:205px;width:1px;height:19px;background:#fff"></div>
<div class="a" style="left:1336px;top:205px;width:1px;height:19px;background:#8e8e8e"></div>
<div class="a" style="left:1337px;top:205px;width:1px;height:19px;background:#fff"></div>
<div class="a" style="left:1467px;top:205px;width:1px;height:19px;background:#8e8e8e"></div>
<div class="a" style="left:1468px;top:205px;width:1px;height:19px;background:#fff"></div>
<div class="a" style="left:1591px;top:205px;width:1px;height:19px;background:#8e8e8e"></div>
<div class="a" style="left:1592px;top:205px;width:1px;height:19px;background:#fff"></div>
<div class="a" style="left:1841px;top:205px;width:1px;height:19px;background:#8e8e8e"></div>
<div class="a" style="left:1842px;top:205px;width:1px;height:19px;background:#fff"></div>
<div class="t" style="left:165px;top:209px;width:45px;overflow:hidden;letter-spacing:-0.3px">hr. Cad.</div>
<div class="t" style="left:214px;top:209px;width:56px;overflow:hidden;letter-spacing:-0.3px">hr. Agend.</div>
<div class="t" style="left:274px;top:209px;width:76px;overflow:hidden;letter-spacing:-0.3px">Tempo Espera</div>
<div class="t" style="left:354px;top:209px;width:296px;overflow:hidden;letter-spacing:-0.3px">Nome do Paciente</div>
<div class="t" style="left:654px;top:209px;width:146px;overflow:hidden;letter-spacing:-0.3px">Histórico</div>
<div class="t" style="left:804px;top:209px;width:120px;overflow:hidden;letter-spacing:-0.3px">Convênio</div>
<div class="t" style="left:928px;top:209px;width:80px;overflow:hidden;letter-spacing:-0.3px">Valor</div>
<div class="t" style="left:1012px;top:209px;width:196px;overflow:hidden;letter-spacing:-0.3px">Status</div>
<div class="t" style="left:1212px;top:209px;width:60px;overflow:hidden;letter-spacing:-0.3px">Sexo</div>
<div class="t" style="left:1276px;top:209px;width:60px;overflow:hidden;letter-spacing:-0.3px">Idade</div>
<div class="t" style="left:1340px;top:209px;width:127px;overflow:hidden;letter-spacing:-0.3px">Critério de Atendimento</div>
<div class="t" style="left:1471px;top:209px;width:120px;overflow:hidden;letter-spacing:-0.3px">Usuário</div>
<div class="t" style="left:1595px;top:209px;width:246px;overflow:hidden;letter-spacing:-0.3px">Usuário Inclusão</div>
<div class="t" style="left:1845px;top:209px;width:61px;overflow:hidden;letter-spacing:-0.3px">Dt. Nascimento</div>
<div class="a" style="left:161px;top:225px;width:1745px;height:17px;background:#316ac5"></div>
<div class="a" style="left:161px;top:225px;width:49px;height:17px;background:#f3f4f2;border:1px dotted #222"></div>
<div class="a" style="left:210px;top:225px;width:1696px;height:1px;border-top:1px dotted #d8a040"></div>
<div class="a" style="left:210px;top:241px;width:1696px;height:1px;border-top:1px dotted #d8a040"></div>
<div class="a" style="left:210px;top:225px;width:1px;height:17px;background:#d6dbe4"></div>
<div class="a" style="left:270px;top:225px;width:1px;height:17px;background:#d6dbe4"></div>
<div class="a" style="left:350px;top:225px;width:1px;height:17px;background:#d6dbe4"></div>
<div class="a" style="left:650px;top:225px;width:1px;height:17px;background:#d6dbe4"></div>
<div class="a" style="left:800px;top:225px;width:1px;height:17px;background:#d6dbe4"></div>
<div class="a" style="left:924px;top:225px;width:1px;height:17px;background:#d6dbe4"></div>
<div class="a" style="left:1008px;top:225px;width:1px;height:17px;background:#d6dbe4"></div>
<div class="a" style="left:1208px;top:225px;width:1px;height:17px;background:#d6dbe4"></div>
<div class="a" style="left:1272px;top:225px;width:1px;height:17px;background:#d6dbe4"></div>
<div class="a" style="left:1336px;top:225px;width:1px;height:17px;background:#d6dbe4"></div>
<div class="a" style="left:1467px;top:225px;width:1px;height:17px;background:#d6dbe4"></div>
<div class="a" style="left:1591px;top:225px;width:1px;height:17px;background:#d6dbe4"></div>
<div class="a" style="left:1841px;top:225px;width:1px;height:17px;background:#d6dbe4"></div>
<div class="t" style="left:164px;top:229px;color:#000;letter-spacing:0">12:36</div>
<div class="t" style="left:213px;top:229px;color:#fff;letter-spacing:0">13:00</div>
<div class="t" style="left:273px;top:229px;color:#fff;letter-spacing:0">10min</div>
<div class="t" style="left:353px;top:229px;color:#fff;letter-spacing:-0.55px">TESTE 2 DOIS</div>
<div class="t" style="left:653px;top:229px;color:#fff;letter-spacing:-0.55px">CONSULTA</div>
<div class="t" style="left:803px;top:229px;color:#fff;letter-spacing:-0.55px">UNIMED GOIANIA</div>
<div class="t" style="left:924px;width:81px;text-align:right;top:229px;color:#fff">95,00</div>
<div class="t" style="left:1011px;top:229px;color:#fff;letter-spacing:-0.3px">A Atender</div>
<div class="t" style="left:1211px;top:229px;color:#fff;letter-spacing:-0.55px">FEMININO</div>
<div class="t" style="left:1275px;top:229px;color:#fff;letter-spacing:-0.55px">20 ANOS</div>
<div class="t" style="left:1470px;top:229px;color:#fff;letter-spacing:-0.55px">CHARLLES</div>
<div class="t" style="left:1594px;top:229px;color:#fff;letter-spacing:-0.55px">CHARLLES</div>
<div class="t" style="left:1844px;top:229px;color:#fff;letter-spacing:0">20/05/2000</div>
<div class="a" style="left:161px;top:242px;width:1745px;height:18px;background:#bacff0"></div>
<div class="a" style="left:210px;top:242px;width:1px;height:18px;background:#dfe6f2"></div>
<div class="a" style="left:270px;top:242px;width:1px;height:18px;background:#dfe6f2"></div>
<div class="a" style="left:350px;top:242px;width:1px;height:18px;background:#dfe6f2"></div>
<div class="a" style="left:650px;top:242px;width:1px;height:18px;background:#dfe6f2"></div>
<div class="a" style="left:800px;top:242px;width:1px;height:18px;background:#dfe6f2"></div>
<div class="a" style="left:924px;top:242px;width:1px;height:18px;background:#dfe6f2"></div>
<div class="a" style="left:1008px;top:242px;width:1px;height:18px;background:#dfe6f2"></div>
<div class="a" style="left:1208px;top:242px;width:1px;height:18px;background:#dfe6f2"></div>
<div class="a" style="left:1272px;top:242px;width:1px;height:18px;background:#dfe6f2"></div>
<div class="a" style="left:1336px;top:242px;width:1px;height:18px;background:#dfe6f2"></div>
<div class="a" style="left:1467px;top:242px;width:1px;height:18px;background:#dfe6f2"></div>
<div class="a" style="left:1591px;top:242px;width:1px;height:18px;background:#dfe6f2"></div>
<div class="a" style="left:1841px;top:242px;width:1px;height:18px;background:#dfe6f2"></div>
<div class="t" style="left:164px;top:247px;color:#000;letter-spacing:0">12:37</div>
<div class="t" style="left:213px;top:247px;color:#000;letter-spacing:0">14:00</div>
<div class="t" style="left:273px;top:247px;color:#000;letter-spacing:0">10min</div>
<div class="t" style="left:353px;top:247px;color:#000;letter-spacing:-0.55px">TESTE 3</div>
<div class="t" style="left:653px;top:247px;color:#000;letter-spacing:-0.55px">CONSULTA INTERNO</div>
<div class="t" style="left:803px;top:247px;color:#000;letter-spacing:-0.55px">AFFEGO</div>
<div class="t" style="left:924px;width:81px;text-align:right;top:247px;color:#000">100,00</div>
<div class="t" style="left:1011px;top:247px;color:#000;letter-spacing:-0.3px">A Atender</div>
<div class="t" style="left:1211px;top:247px;color:#000;letter-spacing:-0.55px">MASCULINO</div>
<div class="t" style="left:1275px;top:247px;color:#000;letter-spacing:-0.55px">4 ANOS</div>
<div class="t" style="left:1470px;top:247px;color:#000;letter-spacing:-0.55px">CHARLLES</div>
<div class="t" style="left:1594px;top:247px;color:#000;letter-spacing:-0.55px">CHARLLES</div>
<div class="t" style="left:1844px;top:247px;color:#000;letter-spacing:0">10/10/2015</div>
<div class="a" style="left:161px;top:260px;width:1745px;height:18px;background:#f2f3f2"></div>
<div class="a" style="left:210px;top:260px;width:1px;height:18px;background:#e4e5e4"></div>
<div class="a" style="left:270px;top:260px;width:1px;height:18px;background:#e4e5e4"></div>
<div class="a" style="left:350px;top:260px;width:1px;height:18px;background:#e4e5e4"></div>
<div class="a" style="left:650px;top:260px;width:1px;height:18px;background:#e4e5e4"></div>
<div class="a" style="left:800px;top:260px;width:1px;height:18px;background:#e4e5e4"></div>
<div class="a" style="left:924px;top:260px;width:1px;height:18px;background:#e4e5e4"></div>
<div class="a" style="left:1008px;top:260px;width:1px;height:18px;background:#e4e5e4"></div>
<div class="a" style="left:1208px;top:260px;width:1px;height:18px;background:#e4e5e4"></div>
<div class="a" style="left:1272px;top:260px;width:1px;height:18px;background:#e4e5e4"></div>
<div class="a" style="left:1336px;top:260px;width:1px;height:18px;background:#e4e5e4"></div>
<div class="a" style="left:1467px;top:260px;width:1px;height:18px;background:#e4e5e4"></div>
<div class="a" style="left:1591px;top:260px;width:1px;height:18px;background:#e4e5e4"></div>
<div class="a" style="left:1841px;top:260px;width:1px;height:18px;background:#e4e5e4"></div>
<div class="t" style="left:164px;top:265px;color:#000;letter-spacing:0">12:38</div>
<div class="t" style="left:213px;top:265px;color:#000;letter-spacing:0">15:00</div>
<div class="t" style="left:273px;top:265px;color:#000;letter-spacing:0">8min</div>
<div class="t" style="left:353px;top:265px;color:#000;letter-spacing:-0.55px">TESTE ASDADF</div>
<div class="t" style="left:653px;top:265px;color:#000;letter-spacing:-0.55px">CONSULTA INTERNO</div>
<div class="t" style="left:803px;top:265px;color:#000;letter-spacing:-0.55px">PARTICULAR</div>
<div class="t" style="left:924px;width:81px;text-align:right;top:265px;color:#000">200,00</div>
<div class="t" style="left:1011px;top:265px;color:#000;letter-spacing:-0.3px">A Atender</div>
<div class="t" style="left:1211px;top:265px;color:#000;letter-spacing:-0.55px">MASCULINO</div>
<div class="t" style="left:1275px;top:265px;color:#000;letter-spacing:-0.3px">120 ANOS</div>
<div class="t" style="left:1470px;top:265px;color:#000;letter-spacing:-0.55px">CHARLLES</div>
<div class="t" style="left:1594px;top:265px;color:#000;letter-spacing:-0.55px">CHARLLES</div>
<div class="a" style="left:161px;top:278px;width:1745px;height:1px;background:#e3e4e6"></div>
<div class="a" style="left:161px;top:958px;width:1746px;height:31px;border-top:1px solid #6e7077;border-bottom:1px solid #6e7077;border-left:1px solid #6e7077;background:linear-gradient(#fbfbfb,#eceef0 40%,#dcdee2)"></div>
<div class="a" style="left:927px;top:961px;width:80px;height:25px;border:1px solid #a8a8a8;background:linear-gradient(#f6f6f6,#efefef)"></div>
<div class="t" style="left:927px;width:74px;text-align:right;top:969px;color:#111;letter-spacing:0">R$ 395,00</div>
<div class="a" style="left:161px;top:989px;width:1746px;height:18px;background:linear-gradient(#f9f9f9,#ececec);border-bottom:1px solid #a9a9a9"></div>
<div class="a" style="left:178px;top:990px;width:1426px;height:15px;border:1px solid #c2c2c2;border-radius:2px;background:linear-gradient(#f7f7f7,#e6e6e6 50%,#d9d9d9 60%,#e0e0e0)"></div>
<div class="a" style="left:887px;top:994px;width:7px;height:7px;background:repeating-linear-gradient(90deg,#8a8a8a 0 1px,transparent 1px 2px)"></div>
<div class="a" style="left:166px;top:993px;width:0;height:0;border-top:4px solid transparent;border-bottom:4px solid transparent;border-right:5px solid #44506e"></div>
<div class="a" style="left:1896px;top:993px;width:0;height:0;border-top:4px solid transparent;border-bottom:4px solid transparent;border-left:5px solid #44506e"></div>
<div class="a" style="left:1px;top:110px;width:1909px;height:906px;border-left:1px solid #bdbdbd;border-bottom:1px solid #c9c9c9;box-shadow:0 1px 1px #e0e0e0"></div>
<div class="a" style="left:1908px;top:137px;width:1px;height:879px;background:#c4c4c4;box-shadow:1px 0 1px #dcdcdc"></div>
<div class="a" style="left:6px;top:203px;width:152px;height:115px;border:1px solid #c6c9cc;background:#1a1c1a"></div>
<div class="a" style="left:7px;top:204px;width:150px;height:6px;background:linear-gradient(90deg,#c8d0d6,#b8bcbe 30%,#c0c4c4 60%,#a8aca8)"></div>
<div class="a" style="left:22px;top:204px;width:3px;height:5px;background:#70787a;filter:blur(0.6px)"></div>
<div class="a" style="left:103px;top:204px;width:3px;height:5px;background:#3a3a3a;filter:blur(0.6px)"></div>
<div class="a" style="left:126px;top:204px;width:3px;height:5px;background:#404040;filter:blur(0.6px)"></div>
<div class="a" style="left:140px;top:204px;width:12px;height:5px;background:#7880a8;filter:blur(0.6px)"></div>
<div class="a" style="left:6px;top:209px;width:148px;height:102px;overflow:hidden;background:#6a6e6c"><div class="a" style="left:-10px;top:-10px;width:168px;height:122px;filter:blur(6px)"><div class="a" style="left:0.0px;top:0.0px;width:29.1px;height:27.6px;background:#c0c8d0"></div><div class="a" style="left:28.5px;top:0.0px;width:19.1px;height:27.6px;background:#b8bcbc"></div><div class="a" style="left:47.0px;top:0.0px;width:19.1px;height:27.6px;background:#a8acac"></div><div class="a" style="left:65.5px;top:0.0px;width:19.1px;height:27.6px;background:#a0a4a4"></div><div class="a" style="left:84.0px;top:0.0px;width:19.1px;height:27.6px;background:#b0b4b4"></div><div class="a" style="left:102.5px;top:0.0px;width:19.1px;height:27.6px;background:#b8bcbc"></div><div class="a" style="left:121.0px;top:0.0px;width:19.1px;height:27.6px;background:#a8aca8"></div><div class="a" style="left:139.5px;top:0.0px;width:29.1px;height:27.6px;background:#a0a498"></div><div class="a" style="left:0.0px;top:27.0px;width:29.1px;height:17.6px;background:#8a9090"></div><div class="a" style="left:28.5px;top:27.0px;width:19.1px;height:17.6px;background:#a8acac"></div><div class="a" style="left:47.0px;top:27.0px;width:19.1px;height:17.6px;background:#8a8a88"></div><div class="a" style="left:65.5px;top:27.0px;width:19.1px;height:17.6px;background:#9a9a98"></div><div class="a" style="left:84.0px;top:27.0px;width:19.1px;height:17.6px;background:#c0c4c4"></div><div class="a" style="left:102.5px;top:27.0px;width:19.1px;height:17.6px;background:#909494"></div><div class="a" style="left:121.0px;top:27.0px;width:19.1px;height:17.6px;background:#b8bcbc"></div><div class="a" style="left:139.5px;top:27.0px;width:29.1px;height:17.6px;background:#a8aca8"></div><div class="a" style="left:0.0px;top:44.0px;width:29.1px;height:17.6px;background:#2a2e2e"></div><div class="a" style="left:28.5px;top:44.0px;width:19.1px;height:17.6px;background:#909494"></div><div class="a" style="left:47.0px;top:44.0px;width:19.1px;height:17.6px;background:#4a4440"></div><div class="a" style="left:65.5px;top:44.0px;width:19.1px;height:17.6px;background:#8a6a50"></div><div class="a" style="left:84.0px;top:44.0px;width:19.1px;height:17.6px;background:#c8ccd0"></div><div class="a" style="left:102.5px;top:44.0px;width:19.1px;height:17.6px;background:#c4c8c8"></div><div class="a" style="left:121.0px;top:44.0px;width:19.1px;height:17.6px;background:#b0b4b0"></div><div class="a" style="left:139.5px;top:44.0px;width:29.1px;height:17.6px;background:#9a9e9a"></div><div class="a" style="left:0.0px;top:61.0px;width:29.1px;height:17.6px;background:#1c2020"></div><div class="a" style="left:28.5px;top:61.0px;width:19.1px;height:17.6px;background:#3a3c3a"></div><div class="a" style="left:47.0px;top:61.0px;width:19.1px;height:17.6px;background:#3a3430"></div><div class="a" style="left:65.5px;top:61.0px;width:19.1px;height:17.6px;background:#7a6450"></div><div class="a" style="left:84.0px;top:61.0px;width:19.1px;height:17.6px;background:#a0a4a0"></div><div class="a" style="left:102.5px;top:61.0px;width:19.1px;height:17.6px;background:#9a9e9a"></div><div class="a" style="left:121.0px;top:61.0px;width:19.1px;height:17.6px;background:#8a8e8a"></div><div class="a" style="left:139.5px;top:61.0px;width:29.1px;height:17.6px;background:#4a4e4a"></div><div class="a" style="left:0.0px;top:78.0px;width:29.1px;height:17.6px;background:#141818"></div><div class="a" style="left:28.5px;top:78.0px;width:19.1px;height:17.6px;background:#1e2222"></div><div class="a" style="left:47.0px;top:78.0px;width:19.1px;height:17.6px;background:#8a8a80"></div><div class="a" style="left:65.5px;top:78.0px;width:19.1px;height:17.6px;background:#4a6060"></div><div class="a" style="left:84.0px;top:78.0px;width:19.1px;height:17.6px;background:#2a4a48"></div><div class="a" style="left:102.5px;top:78.0px;width:19.1px;height:17.6px;background:#8a8a80"></div><div class="a" style="left:121.0px;top:78.0px;width:19.1px;height:17.6px;background:#6a6e68"></div><div class="a" style="left:139.5px;top:78.0px;width:29.1px;height:17.6px;background:#282c28"></div><div class="a" style="left:0.0px;top:95.0px;width:29.1px;height:27.6px;background:#101414"></div><div class="a" style="left:28.5px;top:95.0px;width:19.1px;height:27.6px;background:#181c1c"></div><div class="a" style="left:47.0px;top:95.0px;width:19.1px;height:27.6px;background:#1e3838"></div><div class="a" style="left:65.5px;top:95.0px;width:19.1px;height:27.6px;background:#1a3434"></div><div class="a" style="left:84.0px;top:95.0px;width:19.1px;height:27.6px;background:#8a7060"></div><div class="a" style="left:102.5px;top:95.0px;width:19.1px;height:27.6px;background:#707068"></div><div class="a" style="left:121.0px;top:95.0px;width:19.1px;height:27.6px;background:#3a3e3a"></div><div class="a" style="left:139.5px;top:95.0px;width:29.1px;height:27.6px;background:#1a1e1a"></div></div></div>
<div class="a" style="left:154px;top:209px;width:3px;height:102px;background:linear-gradient(#b0b4b0,#9a9e9a 40%,#303430 60%,#202420)"></div>
<div class="a" style="left:7px;top:311px;width:150px;height:5px;background:#101210"></div>
<div class="a" style="left:37px;top:311px;width:8px;height:5px;background:#3a3028;filter:blur(0.6px)"></div>
<div class="a" style="left:56px;top:311px;width:14px;height:5px;background:#a0a0a0;filter:blur(0.6px)"></div>
<div class="a" style="left:101px;top:311px;width:5px;height:5px;background:#6a5030;filter:blur(0.6px)"></div>
<div class="a" style="left:115px;top:311px;width:14px;height:5px;background:#8a8c8a;filter:blur(0.6px)"></div>
<div class="a" style="left:135px;top:311px;width:10px;height:5px;background:#3a3a3a;filter:blur(0.6px)"></div>
<div class="a" style="left:7px;top:316px;width:150px;height:2px;background:#d6dce2"></div>
<div class="btn" style="top:325px;height:24px"></div>
<svg class="a" style="left:10px;top:329px" width="16" height="16" viewBox="0 0 16 16"><path d="M7 2 L13 1.5 L15 4 L15 12 L7 12Z" fill="#f6f6f6" stroke="#8a8a8a" stroke-width="0.6"/><path d="M9 4.5 L13 4.5 M9 6.5 L13 6.5 M9 8.5 L12 8.5" stroke="#aaa" stroke-width="0.6"/><circle cx="4.5" cy="4" r="2.6" fill="#f4f4f4" stroke="#8a8a8a" stroke-width="0.6"/><path d="M0.8 13 Q1 7 4.5 7 Q8 7 8.2 13Z" fill="#f0f0f0" stroke="#8a8a8a" stroke-width="0.6"/><path d="M2 11.5 L5 14.5 L10.5 8.5" stroke="#19a019" stroke-width="2.2" fill="none"/><circle cx="4" cy="11" r="1.3" fill="#e02020"/><circle cx="13" cy="13" r="2.6" fill="#e83030" stroke="#fff" stroke-width="0.6"/></svg>
<div class="t" style="left:30px;top:330px;color:#0c0c1e;letter-spacing:-0.3px;">Finalizar Atendimento</div>
<div class="a" style="left:144px;top:326px;width:1px;height:20px;background:#5a5a5a"></div>
<div class="a" style="left:146px;top:333px;width:0;height:0;border-left:4.5px solid transparent;border-right:4.5px solid transparent;border-top:5px solid #000"></div>
<div class="btn" style="top:351px;height:28px"></div>
<svg class="a" style="left:9px;top:357px;overflow:visible" width="17" height="17" viewBox="0 0 32 32"><path d="M26 20 L31 24 L27 27Z" fill="#e8e8e8" stroke="#bbb" stroke-width="0.5"/><path d="M4 2 L12 1.5 L13.5 3 L29 4 L29 26 L4 26Z" fill="url(#gFold)" stroke="#c09a4a" stroke-width="0.6"/><path d="M5 4 L28 5 L28 9 L5 8Z" fill="#f4f4f4"/><path d="M5 7 L27 8 L28 11 L6 10Z" fill="#dcdcdc"/><path d="M4 11 L28 12 L29 26 L4 26Z" fill="#f2cf72"/><path d="M2.0 22.58 Q2.0 15.979999999999999 8 15.379999999999999 Q14.0 15.979999999999999 14.0 22.58Z" fill="#e9e9e9" stroke="#8d8d8d" stroke-width="0.7"/><ellipse cx="8" cy="12.559999999999999" rx="3.8" ry="4.56" fill="url(#gFace)"/><path d="M4.01 13.015999999999998 Q3.4400000000000004 7.772 8 8 Q12.94 8 11.99 13.471999999999998 L11.04 11.191999999999998 Q8 10.052 4.96 10.963999999999999Z" fill="#8a5a32"/><path d="M11.0 28.129999999999995 Q11.0 20.979999999999997 17.5 20.33 Q24.0 20.979999999999997 24.0 28.129999999999995Z" fill="#f3e4e8" stroke="#8d8d8d" stroke-width="0.7"/><ellipse cx="17.5" cy="17.56" rx="3.8" ry="4.56" fill="#c99a72"/><path d="M13.51 18.016 Q12.940000000000001 12.772 17.5 13 Q22.439999999999998 13 21.49 18.471999999999998 L20.54 16.192 Q17.5 15.052 14.46 15.963999999999999Z" fill="#1e1410"/></svg>
<div class="t" style="left:26px;width:126px;text-align:center;top:353px;color:#0c0c1e;letter-spacing:-0.3px">Dados Cadastrais do</div>
<div class="t" style="left:26px;width:126px;text-align:center;top:366px;color:#0c0c1e;letter-spacing:-0.3px">Paciente</div>
<div class="btn" style="top:381px;height:30px"></div>
<svg class="a" style="left:11px;top:379px" width="27" height="31" viewBox="2 0 28 32"><path d="M3 31 Q3 19 12 17 L20 17 Q29 19 29 31Z" fill="url(#gCoat)" stroke="#8d8d8d" stroke-width="0.8"/><path d="M12 17 L15.5 30 L19.5 17Z" fill="#7aa4d8"/><path d="M11 17 L14 26 M21 17 L18 26" stroke="#c8c8c8" stroke-width="0.8"/><path d="M8 20 Q5 26 8 30 M23 19 Q26 22 24 24" stroke="#666" stroke-width="0.9" fill="none"/><circle cx="23.5" cy="24.5" r="1.3" fill="none" stroke="#555" stroke-width="0.8"/><ellipse cx="15.5" cy="9" rx="5.2" ry="6.6" fill="url(#gFace)"/><path d="M10 9 Q9 0.5 15.5 0.8 Q22 0.5 21.5 8 L21 12 L20 6.5 Q16 4.5 11 6Z" fill="#232323"/></svg>
<div class="t" style="left:47px;top:391px;color:#0c0c1e;letter-spacing:0.35px;font-weight:bold;">Prontuário Médico</div>
<div class="btn" style="top:413px;height:28px"></div>
<svg class="a" style="left:10px;top:419px" width="16" height="16" viewBox="0 0 16 16"><rect x="2" y="1" width="11" height="14" fill="#1f63d8" stroke="#0b3a8b" stroke-width="0.5"/><rect x="3" y="0" width="2" height="6" fill="#d01818"/><circle cx="8" cy="7" r="2.2" fill="#222"/><ellipse cx="8" cy="11.5" rx="3.5" ry="2.5" fill="#222"/><path d="M13 2 L14.5 2 L14.5 15 L13 15" fill="#eee" stroke="#888" stroke-width="0.4"/></svg>
<div class="t" style="left:31px;top:422px;color:#0c0c1e;letter-spacing:-0.3px;">Agenda de Consultas</div>
<div class="a" style="left:144px;top:414px;width:1px;height:24px;background:#5a5a5a"></div>
<div class="a" style="left:146px;top:423px;width:0;height:0;border-left:4.5px solid transparent;border-right:4.5px solid transparent;border-top:5px solid #000"></div>
<div class="btn" style="top:443px;height:28px"></div>
<svg class="a" style="left:10px;top:449px" width="16" height="16" viewBox="0 0 16 16"><rect x="2" y="1" width="11" height="14" fill="#f8f8f8" stroke="#555" stroke-width="0.7"/><rect x="3" y="0" width="2" height="6" fill="#d01818"/><path d="M4 13 L11 3" stroke="#222" stroke-width="1.2"/><path d="M13 2 L14.5 2 L14.5 15 L13 15" fill="#eee" stroke="#888" stroke-width="0.4"/></svg>
<div class="t" style="left:42px;top:452px;color:#0c0c1e;letter-spacing:-0.3px;">Agenda de Cirurgias</div>
<div class="btn" style="top:473px;height:27px"></div>
<svg class="a" style="left:10px;top:478px" width="16" height="16" viewBox="0 0 16 16"><path d="M5 1 L14 2 L12 15 L3 13Z" fill="#dce9f8" stroke="#8aa3c0" stroke-width="0.5"/><path d="M1 5 L7 12" stroke="#333" stroke-width="1.4"/></svg>
<div class="t" style="left:75px;top:482px;color:#0c0c1e;letter-spacing:-0.3px;">Laudo</div>
<div class="btn" style="top:503px;height:28px"></div>
<svg class="a" style="left:10px;top:509px" width="16" height="16" viewBox="0 0 16 16"><path d="M1 8 L12 6 L15 9 L15 13 L3 14 L1 12Z" fill="#666" stroke="#333" stroke-width="0.5"/><rect x="5" y="2" width="7" height="6" fill="#f4f4f4" stroke="#888" stroke-width="0.5"/><rect x="3" y="10" width="10" height="2" fill="#bbb"/></svg>
<div class="t" style="left:25px;top:512px;color:#0c0c1e;letter-spacing:-0.3px;">Imprimir Lista de Espera</div>
<div class="a" style="left:144px;top:504px;width:1px;height:24px;background:#5a5a5a"></div>
<div class="a" style="left:146px;top:513px;width:0;height:0;border-left:4.5px solid transparent;border-right:4.5px solid transparent;border-top:5px solid #000"></div>
<div class="btn" style="top:533px;height:28px"></div>
<svg class="a" style="left:10px;top:539px" width="16" height="16" viewBox="0 0 16 16"><circle cx="8" cy="9" r="7" fill="#5db84a"/><path d="M8 9 L8 2 A7 7 0 0 1 14.5 7Z" fill="#e23a3a"/><path d="M8 9 L1 9 A7 7 0 0 1 8 2Z" fill="#f2c21b"/><path d="M8 9 L1 9 A7 7 0 0 0 5 15Z" fill="#3a9ad8"/></svg>
<div class="t" style="left:26px;width:126px;text-align:center;top:536px;color:#0c0c1e;letter-spacing:-0.3px">Minhas Estatísticas</div>
<div class="t" style="left:26px;width:126px;text-align:center;top:549px;color:#0c0c1e;letter-spacing:-0.3px">(Consulta)</div>
<div class="btn" style="top:563px;height:28px"></div>
<svg class="a" style="left:10px;top:569px" width="16" height="16" viewBox="0 0 16 16"><circle cx="6" cy="5" r="3.5" fill="#6aa84f"/><ellipse cx="6" cy="12" rx="5.5" ry="4" fill="#6aa84f"/><circle cx="11" cy="11" r="4" fill="#8a8a8a" stroke="#666" stroke-width="1.5" stroke-dasharray="1.5 1"/><circle cx="11" cy="11" r="1.5" fill="#ccc"/></svg>
<div class="t" style="left:29px;top:571px;color:#0c0c1e;letter-spacing:-0.3px;">Minhas Configurações</div>
<div class="a" style="left:144px;top:564px;width:1px;height:24px;background:#5a5a5a"></div>
<div class="a" style="left:146px;top:573px;width:0;height:0;border-left:4.5px solid transparent;border-right:4.5px solid transparent;border-top:5px solid #000"></div>
<div class="btn" style="top:593px;height:27px"></div>
<svg class="a" style="left:10px;top:598px" width="16" height="16" viewBox="0 0 16 16"><path d="M3 14 L2 11 L11 2 L14 5 L5 14Z" fill="#7a9ab8" stroke="#4a6a88" stroke-width="0.6"/></svg>
<div class="t" style="left:51px;top:602px;color:#0c0c1e;letter-spacing:-0.3px;">Alterar Consulta</div>
<div class="btn" style="top:622px;height:30px"></div>
<svg class="a" style="left:10px;top:629px" width="16" height="16" viewBox="0 0 16 16"><circle cx="6" cy="5" r="3" fill="#f1cfa6"/><path d="M3 4 Q3 1 6 1.5 Q9 1 9 4Z" fill="#333"/><ellipse cx="6" cy="12.5" rx="5" ry="3.5" fill="#e8e8e8" stroke="#999" stroke-width="0.5"/><path d="M10 14 L13 6 L11 6 L14 2 L16 7 L14.5 7 L12 14Z" fill="#2aa82a"/></svg>
<div class="t" style="left:28px;top:633px;color:#0c0c1e;letter-spacing:-0.3px;">Solicitar Entrada Paciente</div>
<div class="btn" style="top:655px;height:31px"></div>
<svg class="a" style="left:10px;top:662px" width="16" height="16" viewBox="0 0 16 16"><circle cx="7" cy="7" r="6" fill="#3a3f3a" stroke="#888" stroke-width="1"/><path d="M7 3 L7 7 L10 9" stroke="#6d6" stroke-width="1"/><rect x="9" y="9" width="6" height="6" rx="1" fill="#3cb83c"/></svg>
<div class="t" style="left:26px;width:126px;text-align:center;top:659px;color:#0c0c1e;letter-spacing:-0.3px">Visualizar Tempos de</div>
<div class="t" style="left:26px;width:126px;text-align:center;top:672px;color:#0c0c1e;letter-spacing:-0.3px">Espera do Paciente</div>
<svg width="0" height="0" style="position:absolute"><defs><filter id="blr"><feGaussianBlur stdDeviation="1.2"/></filter></defs></svg>
<div class="a" style="left:4px;top:108px;width:97px;height:30px;border:5px solid #f0434a;box-shadow:1px 2px 3px rgba(0,0,0,.3), inset 1px 2px 3px rgba(0,0,0,.3)"></div>
<div class="a" style="left:4px;top:138px;width:153px;height:44px;border:3px solid #f5a90b;box-shadow:1px 2px 3px rgba(0,0,0,.3), inset 1px 2px 3px rgba(0,0,0,.3)"></div>
<div class="a" style="left:4px;top:179px;width:153px;height:22px;border:3px solid #f5a90b;box-shadow:1px 2px 3px rgba(0,0,0,.3), inset 1px 2px 3px rgba(0,0,0,.3)"></div>
<div class="a" style="left:165px;top:141px;width:219px;height:51px;border:3px solid #f5a90b;box-shadow:1px 2px 3px rgba(0,0,0,.3), inset 1px 2px 3px rgba(0,0,0,.3)"></div>
<div class="a" style="left:405px;top:137px;width:111px;height:64px;border:3px solid #f5a90b;box-shadow:1px 2px 3px rgba(0,0,0,.3), inset 1px 2px 3px rgba(0,0,0,.3)"></div>
<div class="a" style="left:525px;top:140px;width:176px;height:41px;border:3px solid #f5a90b;box-shadow:1px 2px 3px rgba(0,0,0,.3), inset 1px 2px 3px rgba(0,0,0,.3)"></div>
<div class="a" style="left:516px;top:181px;width:185px;height:19px;border:3px solid #f5a90b;box-shadow:1px 2px 3px rgba(0,0,0,.3), inset 1px 2px 3px rgba(0,0,0,.3)"></div>
<div class="a" style="left:702px;top:141px;width:148px;height:54px;border:3px solid #f5a90b;box-shadow:1px 2px 3px rgba(0,0,0,.3), inset 1px 2px 3px rgba(0,0,0,.3)"></div>
<div class="a" style="left:6px;top:322px;width:159px;height:368px;border:3px solid #f5a90b;box-shadow:1px 2px 3px rgba(0,0,0,.3), inset 1px 2px 3px rgba(0,0,0,.3)"></div>
<div class="circ" style="left:108px;top:104px;width:40px;height:40px;line-height:40px"><span style="position:relative;top:1px">A</span></div>
<div class="circ" style="left:36px;top:197px;width:40px;height:40px;line-height:40px"><span style="position:relative;top:1px">B</span></div>
<div class="circ" style="left:256px;top:100px;width:40px;height:40px;line-height:40px"><span style="position:relative;top:1px">C</span></div>
<div class="circ" style="left:428px;top:98px;width:40px;height:40px;line-height:40px"><span style="position:relative;top:1px">D</span></div>
<div class="circ" style="left:580px;top:98px;width:40px;height:40px;line-height:40px"><span style="position:relative;top:1px">E</span></div>
<div class="circ" style="left:560px;top:198px;width:40px;height:40px;line-height:40px"><span style="position:relative;top:1px">F</span></div>
<div class="circ" style="left:752px;top:97px;width:40px;height:40px;line-height:40px"><span style="position:relative;top:1px">G</span></div>
<svg class="a" style="left:170.0px;top:317.7px;overflow:visible" width="51" height="35"><path d="M3.00 15.80 L28.13 4.18 A12.8 12.8 0 1 1 28.13 27.42Z" fill="rgba(0,0,0,.3)" transform="translate(-0.5,2)" filter="url(#blr)"/><path d="M3.00 15.80 L28.13 4.18 A12.8 12.8 0 1 1 28.13 27.42Z" fill="#f5a90b"/><text x="29.00" y="20.80" font-size="14" fill="#fff" text-anchor="middle" font-family="Liberation Sans">H</text></svg>
<svg class="a" style="left:167.0px;top:345.7px;overflow:visible" width="51" height="35"><path d="M3.00 15.80 L28.13 4.18 A12.8 12.8 0 1 1 28.13 27.42Z" fill="rgba(0,0,0,.3)" transform="translate(-0.5,2)" filter="url(#blr)"/><path d="M3.00 15.80 L28.13 4.18 A12.8 12.8 0 1 1 28.13 27.42Z" fill="#f5a90b"/><text x="29.00" y="20.80" font-size="14" fill="#fff" text-anchor="middle" font-family="Liberation Sans">I</text></svg>
<svg class="a" style="left:155.0px;top:378.2px;overflow:visible" width="51" height="35"><path d="M3.00 15.80 L28.13 4.18 A12.8 12.8 0 1 1 28.13 27.42Z" fill="rgba(0,0,0,.3)" transform="translate(-0.5,2)" filter="url(#blr)"/><path d="M3.00 15.80 L28.13 4.18 A12.8 12.8 0 1 1 28.13 27.42Z" fill="#f5a90b"/><text x="29.00" y="20.80" font-size="14" fill="#fff" text-anchor="middle" font-family="Liberation Sans">J</text></svg>
<svg class="a" style="left:158.0px;top:407.2px;overflow:visible" width="51" height="35"><path d="M3.00 15.80 L28.13 4.18 A12.8 12.8 0 1 1 28.13 27.42Z" fill="rgba(0,0,0,.3)" transform="translate(-0.5,2)" filter="url(#blr)"/><path d="M3.00 15.80 L28.13 4.18 A12.8 12.8 0 1 1 28.13 27.42Z" fill="#f5a90b"/><text x="29.00" y="20.80" font-size="14" fill="#fff" text-anchor="middle" font-family="Liberation Sans">K</text></svg>
<svg class="a" style="left:152.0px;top:437.2px;overflow:visible" width="51" height="35"><path d="M3.00 15.80 L28.13 4.18 A12.8 12.8 0 1 1 28.13 27.42Z" fill="rgba(0,0,0,.3)" transform="translate(-0.5,2)" filter="url(#blr)"/><path d="M3.00 15.80 L28.13 4.18 A12.8 12.8 0 1 1 28.13 27.42Z" fill="#f5a90b"/><text x="29.00" y="20.80" font-size="14" fill="#fff" text-anchor="middle" font-family="Liberation Sans">L</text></svg>
<svg class="a" style="left:159.0px;top:470.2px;overflow:visible" width="51" height="35"><path d="M3.00 15.80 L28.13 4.18 A12.8 12.8 0 1 1 28.13 27.42Z" fill="rgba(0,0,0,.3)" transform="translate(-0.5,2)" filter="url(#blr)"/><path d="M3.00 15.80 L28.13 4.18 A12.8 12.8 0 1 1 28.13 27.42Z" fill="#f5a90b"/><text x="29.00" y="20.80" font-size="14" fill="#fff" text-anchor="middle" font-family="Liberation Sans">M</text></svg>
<svg class="a" style="left:152.0px;top:499.2px;overflow:visible" width="51" height="35"><path d="M3.00 15.80 L28.13 4.18 A12.8 12.8 0 1 1 28.13 27.42Z" fill="rgba(0,0,0,.3)" transform="translate(-0.5,2)" filter="url(#blr)"/><path d="M3.00 15.80 L28.13 4.18 A12.8 12.8 0 1 1 28.13 27.42Z" fill="#f5a90b"/><text x="29.00" y="20.80" font-size="14" fill="#fff" text-anchor="middle" font-family="Liberation Sans">N</text></svg>
<svg class="a" style="left:146.0px;top:533.2px;overflow:visible" width="51" height="35"><path d="M3.00 15.80 L28.13 4.18 A12.8 12.8 0 1 1 28.13 27.42Z" fill="rgba(0,0,0,.3)" transform="translate(-0.5,2)" filter="url(#blr)"/><path d="M3.00 15.80 L28.13 4.18 A12.8 12.8 0 1 1 28.13 27.42Z" fill="#f5a90b"/><text x="29.00" y="20.80" font-size="14" fill="#fff" text-anchor="middle" font-family="Liberation Sans">O</text></svg>
<svg class="a" style="left:152.0px;top:561.2px;overflow:visible" width="51" height="35"><path d="M3.00 15.80 L28.13 4.18 A12.8 12.8 0 1 1 28.13 27.42Z" fill="rgba(0,0,0,.3)" transform="translate(-0.5,2)" filter="url(#blr)"/><path d="M3.00 15.80 L28.13 4.18 A12.8 12.8 0 1 1 28.13 27.42Z" fill="#f5a90b"/><text x="29.00" y="20.80" font-size="14" fill="#fff" text-anchor="middle" font-family="Liberation Sans">P</text></svg>
<svg class="a" style="left:150.0px;top:591.2px;overflow:visible" width="51" height="35"><path d="M3.00 15.80 L28.13 4.18 A12.8 12.8 0 1 1 28.13 27.42Z" fill="rgba(0,0,0,.3)" transform="translate(-0.5,2)" filter="url(#blr)"/><path d="M3.00 15.80 L28.13 4.18 A12.8 12.8 0 1 1 28.13 27.42Z" fill="#f5a90b"/><text x="29.00" y="20.80" font-size="14" fill="#fff" text-anchor="middle" font-family="Liberation Sans">Q</text></svg>
<svg class="a" style="left:156.0px;top:619.2px;overflow:visible" width="51" height="35"><path d="M3.00 15.80 L28.13 4.18 A12.8 12.8 0 1 1 28.13 27.42Z" fill="rgba(0,0,0,.3)" transform="translate(-0.5,2)" filter="url(#blr)"/><path d="M3.00 15.80 L28.13 4.18 A12.8 12.8 0 1 1 28.13 27.42Z" fill="#f5a90b"/><text x="29.00" y="20.80" font-size="14" fill="#fff" text-anchor="middle" font-family="Liberation Sans">R</text></svg>
<svg class="a" style="left:147.0px;top:655.2px;overflow:visible" width="51" height="35"><path d="M3.00 15.80 L28.13 4.18 A12.8 12.8 0 1 1 28.13 27.42Z" fill="rgba(0,0,0,.3)" transform="translate(-0.5,2)" filter="url(#blr)"/><path d="M3.00 15.80 L28.13 4.18 A12.8 12.8 0 1 1 28.13 27.42Z" fill="#f5a90b"/><text x="29.00" y="20.80" font-size="14" fill="#fff" text-anchor="middle" font-family="Liberation Sans">S</text></svg>
</body></html>
